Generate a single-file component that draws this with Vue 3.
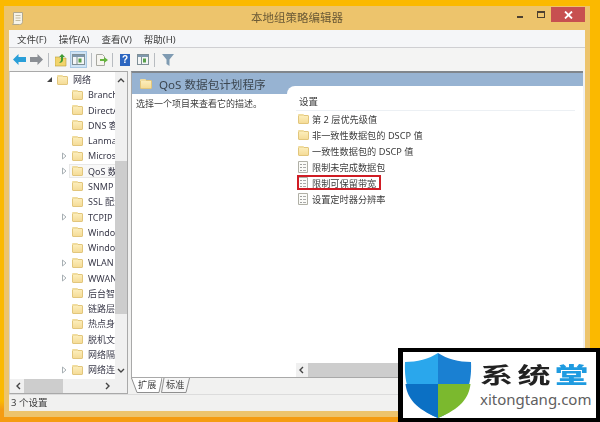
<script setup>
const tree = [
  { t: '网络', top: true, arrow: 'open' },
  { t: 'BranchCache' }, { t: 'DirectAccess' }, { t: 'DNS 客户端' }, { t: 'Lanman 服务器' },
  { t: 'Microsoft', arrow: 'closed' }, { t: 'QoS 数据包计划程序', arrow: 'closed', sel: true },
  { t: 'SNMP' }, { t: 'SSL 配置设置' }, { t: 'TCPIP 设置', arrow: 'closed' },
  { t: 'Windows' }, { t: 'Windows' }, { t: 'WLAN 服务', arrow: 'closed' }, { t: 'WWAN 服务', arrow: 'closed' },
  { t: '后台智能传输' }, { t: '链路层拓扑' }, { t: '热点身份验证' }, { t: '脱机文件' }, { t: '网络隔离' },
  { t: '网络连接', arrow: 'closed' }
]
const settings = [
  { t: '第 2 层优先级值', folder: true },
  { t: '非一致性数据包的 DSCP 值', folder: true },
  { t: '一致性数据包的 DSCP 值', folder: true },
  { t: '限制未完成数据包' },
  { t: '限制可保留带宽', mark: true },
  { t: '设置定时器分辨率' }
]
</script>

<template>
  <div class="desk">
    <div class="win">
      <header class="title">
        <svg class="appicon" width="12" height="13" viewBox="0 0 12 13"><path d="M2.500.5h9v9c0 2-1 3-3 3h-7c1-1 1-2 1-3z" fill="#f6f3e8" stroke="#b0a88e"/><path d="M4.500 3.500h5M4.500 6h5M4.500 8.500h5" stroke="#c4bca2"/></svg>
        <span class="title-text">本地组策略编辑器</span>
        <div class="winbtns">
          <span class="min"></span>
          <span class="max"></span>
          <span class="close"><svg width="9" height="8" viewBox="0 0 9 8"><path d="M1 .5l7 7M8 .5l-7 7" stroke="#fff" stroke-width="1.800"/></svg></span>
        </div>
      </header>
      <nav class="menu">
        <span>文件(F)</span><span>操作(A)</span><span>查看(V)</span><span>帮助(H)</span>
      </nav>
      <div class="tools">
        <svg width="13" height="11" viewBox="0 0 13 11"><path d="M0 5.500L5.500 0v3H13v5H5.500v3z" fill="#2a9fd8"/></svg>
        <svg class="t-fwd" width="13" height="11" viewBox="0 0 13 11"><path d="M13 5.500L7.500 0v3H0v5h7.500v3z" fill="#8b8f94"/></svg>
        <i class="sep s1"></i>
        <svg class="t-up" width="12" height="14" viewBox="0 0 12 14"><path d="M0 4h4l1 1h6v8H0z" fill="#f2d46a" stroke="#b79a3a" stroke-width=".6"/><path d="M7 1l3 3H8v3c0 2-2 3-4 3 1-1 2-2 2-3V4H4z" fill="#3f9b32"/></svg>
        <span class="t-active"><svg width="13" height="11" viewBox="0 0 13 11"><rect x=".5" y=".5" width="12" height="10" fill="#f4f6f6" stroke="#7f8f96"/><rect x="1" y="1" width="11" height="2" fill="#7f98ad"/><path d="M5 3v7" stroke="#7f8f96"/><rect x="6.500" y="4.500" width="3" height="4" fill="#58a04a"/></svg></span>
        <i class="sep s2"></i>
        <svg class="t-doc" width="12" height="12" viewBox="0 0 12 12"><path d="M.5.5h6l2 2v9h-8z" fill="#f6f4ee" stroke="#a8a8a0"/><path d="M4 5h4V3l4 3-4 3V7H4z" fill="#65b33d"/></svg>
        <i class="sep s3"></i>
        <span class="t-help">?</span>
        <svg class="t-pane" width="12" height="11" viewBox="0 0 12 11"><rect x=".5" y=".5" width="11" height="10" fill="#f4f6f6" stroke="#7f8f96"/><rect x="1" y="1" width="10" height="2" fill="#7f98ad"/><path d="M4.500 3v7" stroke="#7f8f96"/><rect x="6" y="4.500" width="3" height="4" fill="#58a04a"/></svg>
        <i class="sep s4"></i>
        <svg class="t-filter" width="12" height="12" viewBox="0 0 12 12"><path d="M0 0h12L7.500 5.500V12l-3-2V5.500z" fill="#7f9bb2"/></svg>
      </div>
      <main class="body">
        <aside class="left">
          <div class="left-top">
            <ul class="tree">
              <li v-for="(r, i) in tree" :key="i" class="row" :class="{ top: r.top }">
                <svg v-if="r.arrow === 'closed'" class="arrow-c" width="5" height="8" viewBox="0 0 5 8"><path d="M.5 1l3.500 3-3.500 3z" fill="#fff" stroke="#a8b0b4"/></svg>
                <span v-else-if="r.arrow === 'open'" class="arrow-o"></span>
                <span v-else class="arrow-none"></span>
                <span class="cell" :class="{ sel: r.sel }">
                  <span class="folder"></span>
                  <span class="lbl">{{ r.t }}</span>
                </span>
              </li>
            </ul>
            <div class="vbar">
              <svg class="chev" width="8" height="5" viewBox="0 0 8 5"><path d="M1 4l3-3 3 3" fill="none" stroke="#444" stroke-width="1.400"/></svg>
              <div class="vtrack"><div class="vthumb"></div></div>
              <svg class="chev" width="8" height="5" viewBox="0 0 8 5"><path d="M1 1l3 3 3-3" fill="none" stroke="#444" stroke-width="1.400"/></svg>
            </div>
          </div>
          <div class="hbar">
            <svg width="5" height="8" viewBox="0 0 5 8"><path d="M4 1L1 4l3 3" fill="none" stroke="#444" stroke-width="1.400"/></svg>
            <div class="htrack"><div class="hthumb"></div></div>
            <svg width="5" height="8" viewBox="0 0 5 8"><path d="M1 1l3 3-3 3" fill="none" stroke="#444" stroke-width="1.400"/></svg>
          </div>
        </aside>
        <section class="right">
          <div class="panel">
            <div class="band">
              <div class="band-title">
                <span class="folder big"></span>
                <span>QoS 数据包计划程序</span>
              </div>
              <div class="band-tab"></div>
            </div>
            <div class="cols">
              <p class="desc">选择一个项目来查看它的描述。</p>
              <div class="list">
                <div class="list-head">设置</div>
                <div v-for="(s, i) in settings" :key="i" class="item" :class="{ mark: s.mark }">
                  <span v-if="s.folder" class="folder"></span>
                  <svg v-else class="doc" width="10" height="12" viewBox="0 0 10 12"><path d="M.5.5h9v11h-9z" fill="#fbfbf8" stroke="#b0b0a6"/><path d="M3 3v1M3 6v1M3 9v1" stroke="#444"/><path d="M5 3.500h3M5 6.500h3M5 9.500h3" stroke="#aaa"/></svg>
                  <span>{{ s.t }}</span>
                </div>
              </div>
            </div>
            <div class="rhbar">
              <svg width="5" height="8" viewBox="0 0 5 8"><path d="M4 1L1 4l3 3" fill="none" stroke="#444" stroke-width="1.400"/></svg>
              <div class="rthumb"></div>
            </div>
          </div>
          <div class="tabs">
            <span class="tab t1">
              <svg width="31" height="15" viewBox="0 0 31 15"><path d="M.5 0L6 14.500h22L31 0" fill="#fff" stroke="#8f8f8f"/></svg>
              <span>扩展</span>
            </span>
            <span class="tab t2">
              <svg width="29" height="15" viewBox="0 0 29 15"><path d="M3 0L.5 14.500H25L28.500 0" fill="#f6f6f6" stroke="#8f8f8f"/></svg>
              <span>标准</span>
            </span>
          </div>
        </section>
      </main>
      <footer class="status">3 个设置</footer>
    </div>
    <aside class="logo">
      <svg class="shield" width="68" height="65" viewBox="0 0 68 65">
        <path d="M34 0C25 6 13 9 1 9c-1 22 4 44 33 56z" fill="#2aa7ec"/>
        <path d="M34 0c9 6 21 9 33 9 1 22-4 44-33 56z" fill="#1a80d2"/>
        <path d="M1.500 31C3 45 12 56 34 65V31z" fill="#0b70c4"/>
        <path d="M66.500 31C65 45 56 56 34 65V31z" fill="#7bb92e"/>
      </svg>
      <div class="brand">
        <div class="brand-cn">系统<b>堂</b></div>
        <div class="brand-en">xitongtang.com</div>
      </div>
    </aside>
  </div>
</template>

<style scoped>
* { box-sizing: border-box; }
.desk {
  position: relative;
  width: 600px;
  height: 422px;
  overflow: hidden;
  padding: 6px 10px 5px 4px;
  background: linear-gradient(180deg, #fbb900 0 95%, #f59c12 97%);
  font-family: "Noto Sans", "Noto Sans CJK SC", sans-serif;
  font-size: 9.200px;
  color: #3c3c3c;
}
.win {
  height: 411px;
  display: flex;
  flex-direction: column;
  background: #edc46c;
  padding: 0 5px 6px 5px;
  filter: blur(0.3px);
}
.title {
  position: relative;
  height: 24px;
  flex: none;
  display: flex;
  align-items: center;
}
.appicon { margin: 1px 0 0 2px; }
.title-text {
  position: absolute;
  left: 242px;
  top: 4px;
  font-size: 11.500px;
  line-height: 16px;
  color: #6b5a36;
}
.winbtns {
  position: absolute;
  right: 0;
  top: 1px;
  width: 70px;
  height: 15px;
  display: flex;
  align-items: flex-start;
}
.min { width: 6px; height: 2px; background: #4d4030; margin: 9px 0 0 2px; }
.max { width: 8px; height: 7px; border: 1px solid #4d4030; border-top-width: 2px; margin: 4px 0 0 14px; }
.close { width: 34px; height: 15px; background: #c75050; margin-left: 6px; display: flex; align-items: center; justify-content: center; }
.menu {
  height: 18px;
  flex: none;
  display: flex;
  gap: 12px;
  padding-left: 8px;
  align-items: center;
  background: #f5f6f8;
  border-bottom: 1px solid #cfcfd2;
  font-size: 9.500px;
}
.tools {
  height: 23px;
  flex: none;
  background: #f4f4f3;
  display: flex;
  align-items: center;
  padding-left: 4px;
}
.tools > svg, .tools > span, .sep { flex: none; }
.t-fwd { margin-left: 4px; }
.sep { width: 1px; height: 14px; background: #b8bcc0; }
.s1 { margin-left: 5px; }
.t-up { margin-left: 6px; }
.t-active { width: 17px; height: 17px; margin-left: 3px; background: #cfe3f4; border: 1px solid #a8c8e4; display: flex; align-items: center; justify-content: center; }
.s2 { margin-left: 4px; }
.t-doc { margin-left: 4px; }
.s3 { margin-left: 4px; }
.t-help { width: 10px; height: 12px; margin-left: 7px; background: #2d66c0; color: #fff; font: bold 10px/12px "Liberation Sans", sans-serif; text-align: center; }
.t-pane { margin-left: 7px; }
.s4 { margin-left: 5px; }
.t-filter { margin-left: 7px; }
.body {
  flex: 1;
  min-height: 0;
  display: flex;
  background: #f1f1f0;
  padding-right: 2px;
}
.left {
  width: 119px;
  flex: none;
  display: flex;
  flex-direction: column;
  background: #fff;
  border: 1px solid #a9a9a9;
  border-left-color: #d4d4d4;
}
.left-top { flex: 1; min-height: 0; display: flex; }
.tree { list-style: none; margin: 0; padding: 0; flex: 1; min-width: 0; overflow: hidden; }
.row {
  height: 15.280px;
  display: flex;
  align-items: center;
  padding-left: 50px;
  white-space: nowrap;
  font-size: 9px;
  color: #3a3a4a;
}
.row.top { padding-left: 37px; }
.arrow-none { width: 12px; flex: none; }
.arrow-c { flex: none; margin: 0 5px 0 2px; }
.arrow-o { width: 0; height: 0; flex: none; border-right: 5px solid #444; border-top: 5px solid transparent; margin-right: 5px; }
.cell { display: flex; align-items: center; height: 14px; padding-left: 2px; margin-left: -3px; border: 1px solid transparent; border-right: 0; flex: 1; min-width: 0; }
.cell.sel { background: #f8f8f8; border-color: #e8e8e8; }
.folder {
  display: inline-block;
  flex: none;
  width: 11px;
  height: 9px;
  border-radius: 1px;
  background: linear-gradient(180deg, #fcedba, #f5dc98);
  border: 1px solid #e2c67c;
  position: relative;
  margin-top: 1px;
}
.folder::before {
  content: "";
  position: absolute;
  left: -1px;
  top: -2px;
  width: 6px;
  height: 2px;
  background: #f0dc9e;
  border-radius: 1px 1px 0 0;
}
.folder.big { width: 12px; height: 9px; margin-top: 0; }
.lbl { margin-left: 5px; }
.vbar { width: 12px; flex: none; display: flex; flex-direction: column; align-items: center; background: #f0f0f0; padding: 6px 0; }
.chev { flex: none; }
.vtrack { flex: 1; width: 100%; margin: 2px 0; padding-top: 76px; }
.vthumb { height: 153px; background: #cdcdcd; }
.hbar { height: 14px; flex: none; background: #f0f0f0; display: flex; align-items: center; padding: 0 17px 0 6px; }
.htrack { flex: 1; height: 100%; padding-left: 3px; }
.hthumb { width: 39px; height: 100%; background: #cdcdcd; }
.right { flex: 1; margin-left: 3px; min-width: 0; display: flex; flex-direction: column; }
.panel { flex: 1; min-height: 0; display: flex; flex-direction: column; background: #fff; border-top: 2px solid #80868c; border-left: 1px solid #a9a9a9; position: relative; }
.band { height: 21px; flex: none; display: flex; background: #97b3d2; }
.band-title { width: 155px; flex: none; display: flex; align-items: center; gap: 7px; padding: 1px 0 0 8px; font-size: 11.600px; color: #3c4650; white-space: nowrap; }
.band-tab { flex: 1; margin-top: 13px; background: #fff; border-radius: 8px 0 0 0; }
.cols { flex: 1; min-height: 0; display: flex; }
.desc { margin: 3px 0 0 4px; width: 160px; flex: none; line-height: 14px; font-size: 9px; }
.list { flex: 1; padding-top: 1px; }
.list-head { height: 16px; line-height: 14px; padding-left: 3px; border-bottom: 1px solid #ecf0f4; margin-right: 8px; font-size: 9.500px; }
.item { height: 16px; margin-left: 1px; display: flex; align-items: center; gap: 3px; width: 84px; white-space: nowrap; padding-left: 1px; }
.doc { flex: none; margin-right: 1px; }
.mark { outline: 2px solid #d01c24; outline-offset: -2px; height: 15px; margin-top: 0; margin-bottom: 1px; }
.rhbar { height: 14px; flex: none; margin-left: 164px; background: #f0f0f0; display: flex; align-items: center; padding-left: 3px; gap: 4px; }
.rthumb { flex: 1; height: 100%; background: #cdcdcd; }
.tabs { height: 17px; flex: none; display: flex; background: #f1f1f0; border-top: 1px solid #a9a9a9; }
.tab { position: relative; height: 15px; line-height: 14px; }
.tab svg { position: absolute; left: 0; top: 0; }
.tab span { position: relative; }
.t1 { width: 31px; padding-left: 7px; }
.t2 { width: 29px; margin-left: -1px; padding-left: 5px; }
.status { height: 17px; flex: none; background: #f1f1f0; line-height: 16px; padding-left: 2px; font-size: 9.500px; border-top: 1px solid #dcdcdc; }
.logo {
  position: absolute;
  left: 398px;
  top: 348px;
  width: 202px;
  height: 74px;
  background: #fff;
  border: 4px solid #000;
  border-left-width: 5px;
  display: flex;
  align-items: center;
  gap: 9px;
  padding-left: 1px;
  filter: blur(0.3px);
}
.shield { flex: none; }
.brand { display: flex; flex-direction: column; margin-top: -4px; }
.brand-cn { font: 700 22px/32px "Noto Sans CJK SC", sans-serif; letter-spacing: 3px; color: #222; transform: scaleX(1.500); transform-origin: left center; white-space: nowrap; margin-left: -1px; }
.brand-cn b { color: #1f9be0; }
.brand-en { font: 15px/20px "Noto Sans", sans-serif; color: #606060; white-space: nowrap; margin-left: -1px; }
</style>
